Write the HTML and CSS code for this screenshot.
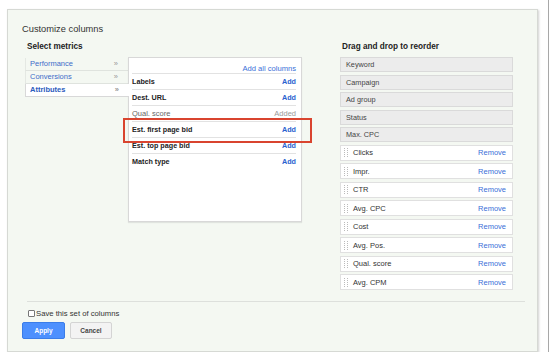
FILE: index.html
```html
<!DOCTYPE html>
<html lang="en">
<head>
    <meta charset="UTF-8" />
    <title>Customize columns</title>
    <link rel="stylesheet" href="styles.css">
</head>
<body>
    <div class="page">
        <div class="dialog">
            <h1 class="title">Customize columns</h1>

            <div class="columns">
                <div class="metrics">
                    <h2 class="heading">Select metrics</h2>
                    <div class="picker">
                        <ul class="nav">
                            <li class="nav-item"><span>Performance</span><span class="chev">&raquo;</span></li>
                            <li class="nav-item"><span>Conversions</span><span class="chev">&raquo;</span></li>
                            <li class="nav-item selected"><span>Attributes</span><span class="chev">&raquo;</span></li>
                        </ul>
                        <div class="list">
                            <div class="list-top"><a class="add-all">Add all columns</a></div>
                            <div class="row"><span class="name">Labels</span><a class="add">Add</a></div>
                            <div class="row"><span class="name">Dest. URL</span><a class="add">Add</a></div>
                            <div class="row added"><span class="name">Qual. score</span><span class="added-label">Added</span></div>
                            <div class="row highlighted"><span class="name">Est. first page bid</span><a class="add">Add</a></div>
                            <div class="row"><span class="name">Est. top page bid</span><a class="add">Add</a></div>
                            <div class="row last"><span class="name">Match type</span><a class="add">Add</a></div>
                        </div>
                    </div>
                </div>

                <div class="order">
                    <h2 class="heading">Drag and drop to reorder</h2>
                    <div class="fixed">
                        <div class="fixed-item">Keyword</div>
                        <div class="fixed-item">Campaign</div>
                        <div class="fixed-item">Ad group</div>
                        <div class="fixed-item">Status</div>
                        <div class="fixed-item">Max. CPC</div>
                    </div>
                    <div class="movable">
                        <div class="move-item"><span class="handle"></span><span class="move-name">Clicks</span><a class="remove">Remove</a></div>
                        <div class="move-item"><span class="handle"></span><span class="move-name">Impr.</span><a class="remove">Remove</a></div>
                        <div class="move-item"><span class="handle"></span><span class="move-name">CTR</span><a class="remove">Remove</a></div>
                        <div class="move-item"><span class="handle"></span><span class="move-name">Avg. CPC</span><a class="remove">Remove</a></div>
                        <div class="move-item"><span class="handle"></span><span class="move-name">Cost</span><a class="remove">Remove</a></div>
                        <div class="move-item"><span class="handle"></span><span class="move-name">Avg. Pos.</span><a class="remove">Remove</a></div>
                        <div class="move-item"><span class="handle"></span><span class="move-name">Qual. score</span><a class="remove">Remove</a></div>
                        <div class="move-item"><span class="handle"></span><span class="move-name">Avg. CPM</span><a class="remove">Remove</a></div>
                    </div>
                </div>
            </div>

            <div class="separator"></div>

            <label class="save"><input type="checkbox" class="check" />Save this set of columns</label>

            <div class="buttons">
                <button class="btn apply">Apply</button>
                <button class="btn cancel">Cancel</button>
            </div>
        </div>
        <div class="edge"></div>
    </div>
</body>
</html>
```

FILE: styles.css
```css
body {
    margin: 0;
    padding: 0;
    background: #fff;
    font-family: "Liberation Sans", Arial, sans-serif;
    color: #222;
}

.page {
    display: flex;
    align-items: flex-start;
}

.dialog {
    box-sizing: border-box;
    width: 531px;
    height: 343px;
    margin: 9px 0 0 7px;
    border: 1px solid #d6d9d4;
    background: #f4f8f2;
    box-shadow: 1px 1px 2px rgba(0,0,0,0.18);
}

.edge {
    width: 1px;
    height: 352px;
    margin-left: 10px;
    background: #a8a8a8;
}

.title {
    margin: 0;
    padding: 12px 0 0 14px;
    font-size: 9.3px;
    line-height: 14px;
    font-weight: normal;
    color: #333;
}

.columns {
    display: flex;
    margin-top: 5px;
    padding-left: 17px;
}

.heading {
    margin: 0 0 4px 2px;
    font-size: 8.2px;
    line-height: 12px;
    font-weight: bold;
    color: #222;
}

.metrics {
    width: 277px;
}

.picker {
    display: flex;
    align-items: flex-start;
}

.nav {
    list-style: none;
    margin: 1px 0 0;
    padding: 0;
    width: 103px;
}

.nav-item {
    display: flex;
    justify-content: space-between;
    height: 12px;
    line-height: 12px;
    padding: 0 10px 0 4px;
    font-size: 7.5px;
    color: #3d6cc9;
    border-left: 1px solid #e4e8e3;
    border-bottom: 1px solid #dfe3de;
}

.nav-item .chev {
    color: #999;
    font-size: 7.5px;
}

.nav-item.selected {
    background: #fff;
    font-weight: bold;
    color: #2b5bbd;
    border-left: 1px solid #d8d8d8;
    border-bottom: 1px solid #d8d8d8;
    position: relative;
    z-index: 1;
    margin-right: -1px;
}

.list {
    box-sizing: border-box;
    width: 174px;
    height: 165px;
    background: #fff;
    border: 1px solid #d8d8d8;
    box-shadow: 0 1px 1px rgba(0,0,0,0.08);
    padding: 2px 5px 0 3px;
}

.list-top {
    text-align: right;
    height: 13px;
    line-height: 12px;
    border-bottom: 1px solid #e2e2e2;
}

.add-all {
    font-size: 7.6px;
    color: #3a6fd8;
}

.row {
    display: flex;
    justify-content: space-between;
    align-items: center;
    height: 15px;
    border-bottom: 1px solid #e2e2e2;
    font-size: 7.2px;
}

.row.last {
    border-bottom: none;
}

.row .name {
    font-weight: bold;
    color: #222;
}

.add {
    font-weight: bold;
    color: #2a5fcf;
}

.row.added .name {
    font-weight: normal;
    font-size: 7.5px;
    color: #666;
}

.added-label {
    font-size: 7.5px;
    color: #999;
}

.row.highlighted {
    position: relative;
}

.row.highlighted::after {
    content: "";
    position: absolute;
    left: -9px;
    right: -16px;
    top: -4px;
    bottom: -6px;
    border: 2px solid #d9442f;
}

.order {
    width: 173px;
    margin-left: 38px;
}

.fixed-item {
    box-sizing: border-box;
    height: 15px;
    line-height: 13px;
    margin-bottom: 2.5px;
    padding-left: 5px;
    background: #ececec;
    border: 1px solid #dadada;
    font-size: 7.3px;
    color: #444;
}

.movable {
    margin-top: 2.5px;
}

.move-item {
    box-sizing: border-box;
    display: flex;
    align-items: center;
    height: 16px;
    margin-bottom: 2.57px;
    padding: 0 6px 0 3px;
    background: #fff;
    border: 1px solid #e0e0e0;
    font-size: 7.5px;
    color: #333;
}

.handle {
    box-sizing: border-box;
    width: 4px;
    height: 9px;
    margin-right: 5px;
    border-left: 1px dotted #bbb;
    border-right: 1px dotted #bbb;
}

.move-name {
    flex: 1;
}

.remove {
    color: #3a6fd8;
}

.separator {
    margin: 8px 0 0 19px;
    width: 498px;
    height: 1px;
    background: #dde0dc;
}

.save {
    display: flex;
    align-items: center;
    margin: 5px 0 0 20px;
    height: 12px;
    font-size: 7.7px;
    color: #333;
}

.check {
    appearance: none;
    box-sizing: border-box;
    width: 7px;
    height: 7px;
    margin: 0 1px 0 0;
    border: 1px solid #777;
    background: #fff;
    border-radius: 1px;
}

.buttons {
    display: flex;
    gap: 5px;
    margin: 3px 0 0 14px;
}

.btn {
    box-sizing: border-box;
    height: 17px;
    padding: 0;
    font-family: "Liberation Sans", Arial, sans-serif;
    font-size: 6.5px;
    font-weight: bold;
    border-radius: 2px;
    cursor: pointer;
}

.apply {
    width: 43px;
    background: #4d90fe;
    border: 1px solid #3b7de8;
    color: #fff;
}

.cancel {
    width: 42px;
    background: #f3f3f3;
    border: 1px solid #d4d4d4;
    color: #444;
}
```
